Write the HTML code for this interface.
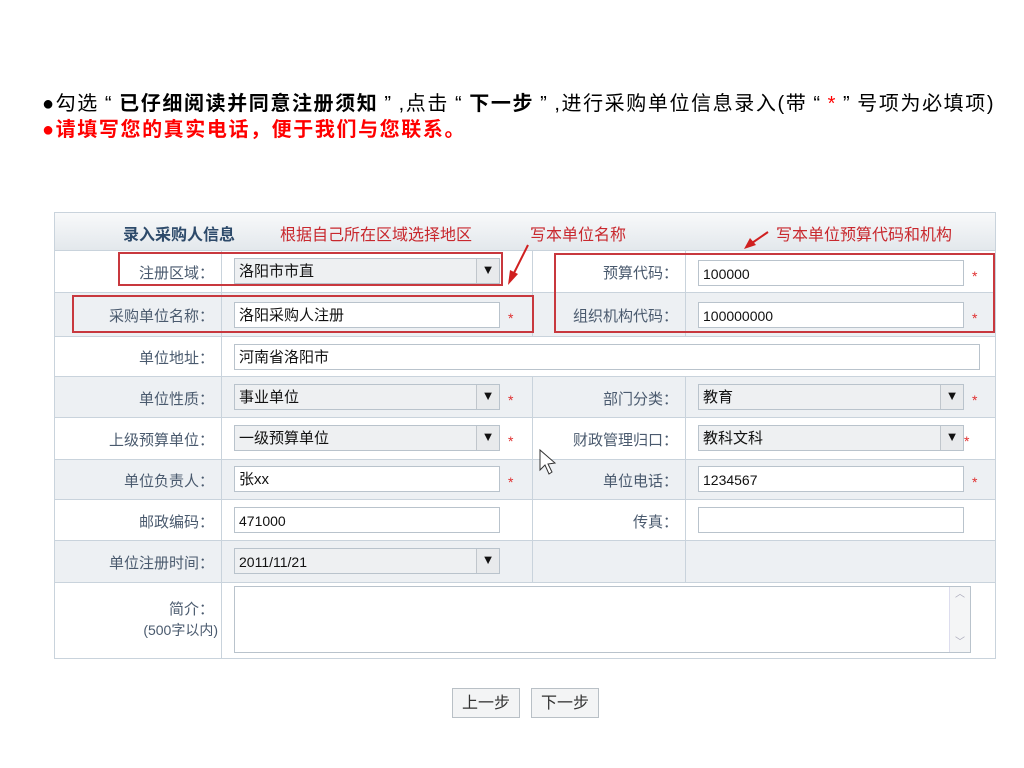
<!DOCTYPE html>
<html><head><meta charset="utf-8"><style>
body{margin:0;width:1024px;height:768px;background:#fff;position:relative;overflow:hidden;font-family:"Liberation Sans","Noto Sans CJK SC",sans-serif}
.a{position:absolute}
.t1{left:42px;top:87px;font-size:20px;color:#000;white-space:nowrap;letter-spacing:1.6px}
.t2{left:42px;top:113px;font-size:20px;color:#f00;font-weight:bold;white-space:nowrap;letter-spacing:1.6px}
.q{margin:0 6px}
.row{position:absolute;left:55px;width:940px;border-bottom:1px solid #c9d3dc}
.g{background:#edf0f3}
.lbl{position:absolute;font-size:15px;color:#4a5a6e;text-align:right;white-space:nowrap}
.in{position:absolute;height:26px;border:1px solid #b9c3cc;background:#fff;box-sizing:border-box;font-size:15px;line-height:26px;padding-left:4px;color:#111;font-family:"Liberation Sans","Noto Sans CJK SC",sans-serif}
.sel{background:#eef0f2}
.arr{position:absolute;right:0;top:0;width:22px;height:24px;border-left:1px solid #c0c6cc;background:#e8eaec;font-size:13px;text-align:center;line-height:22px;color:#111}
.st{position:absolute;color:#e03030;font-size:14px}
.vl{position:absolute;width:1px;background:#c9d3dc}
.red{position:absolute;border:2px solid #c8383e;box-sizing:border-box}
.btn{position:absolute;top:688px;width:68px;height:30px;border:1px solid #b9c0c6;background:#f3f4f5;font-size:16px;text-align:center;line-height:30px;color:#333;box-sizing:border-box}
</style></head><body>
<div class="a t1">●勾选<span class="q">“</span><b>已仔细阅读并同意注册须知</b><span class="q">”</span>,点击<span class="q">“</span><b>下一步</b><span class="q">”</span>,进行采购单位信息录入(带<span class="q">“</span><span style="color:#f00">*</span><span class="q">”</span>号项为必填项)</div>
<div class="a t2">●请填写您的真实电话，便于我们与您联系。</div>

<div class="a" style="left:54px;top:212px;width:942px;height:447px;border:1px solid #c9d3dc;box-sizing:border-box"></div>
<div class="row" style="top:213px;height:37px;background:linear-gradient(#f8f9fa,#e3e8ec)"></div>
<div class="a" style="left:123px;top:221px;font-size:16px;font-weight:bold;color:#2d4a6a">录入采购人信息</div>
<div class="a" style="left:280px;top:221px;font-size:16px;color:#c8282e">根据自己所在区域选择地区</div>
<div class="a" style="left:530px;top:221px;font-size:16px;color:#c8282e">写本单位名称</div>
<div class="a" style="left:776px;top:221px;font-size:16px;color:#c8282e">写本单位预算代码和机构</div>

<div class="row" style="top:250px;height:42px"></div>
<div class="row g" style="top:293px;height:43px"></div>
<div class="row" style="top:337px;height:39px"></div>
<div class="row g" style="top:377px;height:40px"></div>
<div class="row" style="top:418px;height:41px"></div>
<div class="row g" style="top:460px;height:39px"></div>
<div class="row" style="top:500px;height:40px"></div>
<div class="row g" style="top:541px;height:41px"></div>

<div class="vl" style="left:221px;top:250px;height:408px"></div>
<div class="vl" style="left:532px;top:250px;height:86px"></div>
<div class="vl" style="left:532px;top:377px;height:206px"></div>
<div class="vl" style="left:685px;top:250px;height:86px"></div>
<div class="vl" style="left:685px;top:377px;height:206px"></div>

<div class="lbl" style="right:810px;top:262px">注册区域：</div>
<div class="lbl" style="right:810px;top:305px">采购单位名称：</div>
<div class="lbl" style="right:810px;top:347px">单位地址：</div>
<div class="lbl" style="right:810px;top:388px">单位性质：</div>
<div class="lbl" style="right:810px;top:429px">上级预算单位：</div>
<div class="lbl" style="right:810px;top:470px">单位负责人：</div>
<div class="lbl" style="right:810px;top:511px">邮政编码：</div>
<div class="lbl" style="right:810px;top:552px">单位注册时间：</div>
<div class="lbl" style="right:810px;top:598px">简介：</div>
<div class="lbl" style="right:806px;top:620px;font-size:14px">(500字以内)</div>

<div class="lbl" style="right:346px;top:262px">预算代码：</div>
<div class="lbl" style="right:346px;top:305px">组织机构代码：</div>
<div class="lbl" style="right:346px;top:388px">部门分类：</div>
<div class="lbl" style="right:346px;top:429px">财政管理归口：</div>
<div class="lbl" style="right:346px;top:470px">单位电话：</div>
<div class="lbl" style="right:346px;top:511px">传真：</div>

<div class="in sel" style="left:234px;top:258px;width:266px">洛阳市市直<div class="arr">▼</div></div>
<div class="in" style="left:234px;top:302px;width:266px">洛阳采购人注册</div><div class="st" style="left:508px;top:310px">*</div>
<div class="in" style="left:234px;top:344px;width:746px">河南省洛阳市</div>
<div class="in sel" style="left:234px;top:384px;width:266px">事业单位<div class="arr">▼</div></div><div class="st" style="left:508px;top:392px">*</div>
<div class="in sel" style="left:234px;top:425px;width:266px">一级预算单位<div class="arr">▼</div></div><div class="st" style="left:508px;top:433px">*</div>
<div class="in" style="left:234px;top:466px;width:266px">张xx</div><div class="st" style="left:508px;top:474px">*</div>
<div class="in" style="left:234px;top:507px;width:266px;font-size:14px">471000</div>
<div class="in sel" style="left:234px;top:548px;width:266px;font-size:14px">2011/11/21<div class="arr">▼</div></div>
<div class="in" style="left:234px;top:586px;width:737px;height:67px"><div style="position:absolute;right:0;top:0;width:20px;height:65px;border-left:1px solid #dde;background:#f4f5f6;color:#aab;font-size:10px;text-align:center;line-height:16px">︿<br><br><br>﹀</div></div>

<div class="in" style="left:698px;top:260px;width:266px;font-size:14px">100000</div><div class="st" style="left:972px;top:268px">*</div>
<div class="in" style="left:698px;top:302px;width:266px;font-size:14px">100000000</div><div class="st" style="left:972px;top:310px">*</div>
<div class="in sel" style="left:698px;top:384px;width:266px">教育<div class="arr">▼</div></div><div class="st" style="left:972px;top:392px">*</div>
<div class="in sel" style="left:698px;top:425px;width:266px">教科文科<div class="arr">▼</div></div><div class="st" style="left:964px;top:433px">*</div>
<div class="in" style="left:698px;top:466px;width:266px;font-size:14px">1234567</div><div class="st" style="left:972px;top:474px">*</div>
<div class="in" style="left:698px;top:507px;width:266px"></div>

<div class="red" style="left:118px;top:252px;width:385px;height:34px"></div>
<div class="red" style="left:72px;top:295px;width:462px;height:38px"></div>
<div class="red" style="left:554px;top:253px;width:441px;height:80px"></div>

<svg class="a" style="left:0;top:0" width="1024" height="768">
<line x1="528" y1="245" x2="513" y2="275" stroke="#d02020" stroke-width="2"/>
<polygon points="508,285 510,270 518,274" fill="#d02020"/>
<line x1="768" y1="232" x2="752" y2="243" stroke="#d02020" stroke-width="2"/>
<polygon points="744,249 750,238 756,245" fill="#d02020"/>
<path d="M540 450 L540 470 L545 465 L549 474 L552 472 L548 464 L555 463 Z" fill="#fff" stroke="#333" stroke-width="1"/>
</svg>

<div class="btn" style="left:452px">上一步</div>
<div class="btn" style="left:531px">下一步</div>
</body></html>
